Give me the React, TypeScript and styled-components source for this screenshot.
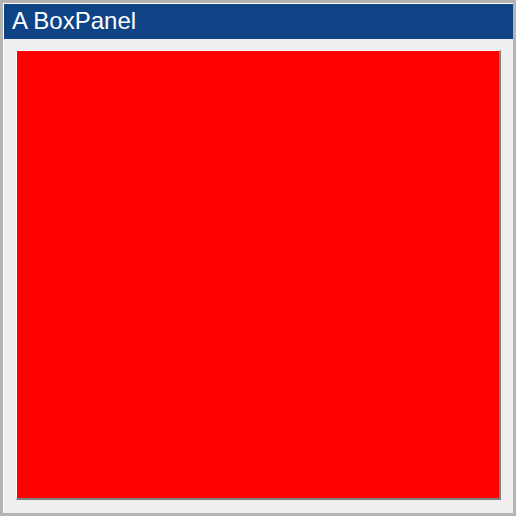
import React from "react";
import styled, { createGlobalStyle } from "styled-components";

const GlobalStyle = createGlobalStyle`
  html, body {
    margin: 0;
    padding: 0;
    background: #ffffff;
  }
  body {
    font-family: "Liberation Sans", Arial, sans-serif;
  }
`;

const App = (): JSX.Element => {
  return (
    <>
      <GlobalStyle />
      <Frame>
        <Panel>
          <TitleBar>A BoxPanel</TitleBar>
          <Body>
            <Box />
          </Body>
        </Panel>
      </Frame>
    </>
  );
};

export default App;

const Frame = styled.div`
  width: 516px;
  height: 516px;
  box-sizing: border-box;
  border: 3px solid #b4b4b4;
  padding: 1px 0 0 1px;
  background: #ffffff;
`;

const Panel = styled.div`
  width: 509px;
  height: 509px;
  display: flex;
  flex-direction: column;
  background: #efefef;
`;

const TitleBar = styled.div`
  height: 35px;
  flex: none;
  box-sizing: border-box;
  background: #0e4385;
  color: #ffffff;
  font-family: "Liberation Sans", Arial, sans-serif;
  font-size: 24px;
  line-height: 33px;
  padding-left: 8px;
  white-space: nowrap;
`;

const Body = styled.div`
  flex: 1;
  display: flex;
  padding: 11px 12px 13px 12px;
`;

const Box = styled.div`
  flex: 1;
  background: #ff0000;
  border-top: 1px solid #ffffff;
  border-left: 1px solid #ffffff;
  border-right: 2px solid #808080;
  border-bottom: 2px solid #808080;
`;
